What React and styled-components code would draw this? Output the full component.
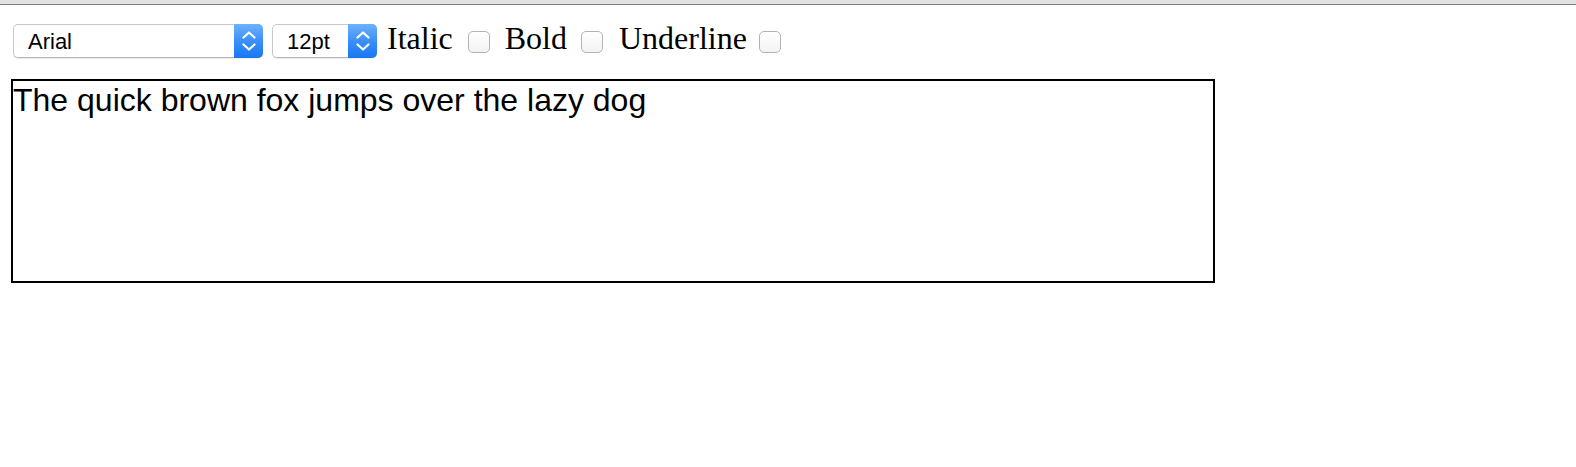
import React from 'react';
import styled, { createGlobalStyle } from 'styled-components';

const GlobalStyle = createGlobalStyle`
  html, body {
    margin: 0;
    padding: 0;
    background: #fff;
  }
  body {
    font-family: "Liberation Serif", "Times New Roman", serif;
    color: #000;
  }
`;

const TopBar = styled.div`
  height: 4px;
  background: #e2e2e2;
  border-bottom: 1px solid #7d7d7d;
`;

const Toolbar = styled.div`
  display: flex;
  align-items: flex-start;
  padding: 14px 0 0 13px;
  height: 46px;
`;

const SelectBox = styled.div`
  display: flex;
  align-items: stretch;
  box-sizing: border-box;
  width: ${p => p.width}px;
  height: 34px;
  margin: 5px ${p => p.gap}px 0 0;
  border: 1px solid #c9c9c9;
  border-bottom-color: #b4b4b4;
  border-radius: 5px;
  background: #fff;
  box-shadow: 0 1px 1px rgba(0, 0, 0, 0.08);
  font-family: "Liberation Sans", Arial, sans-serif;
  font-size: 22px;
  cursor: default;
`;

const SelectValue = styled.span`
  flex: 1;
  display: flex;
  align-items: center;
  padding-left: ${p => p.pad}px;
  padding-top: 1px;
`;

const Stepper = styled.span`
  width: 29px;
  margin: -1px -1px -1px 0;
  border-radius: 0 5px 5px 0;
  background: linear-gradient(to bottom, #6cb2fb 0%, #3b8ff8 50%, #1877f5 100%);
  display: flex;
  align-items: center;
  justify-content: center;
`;

const Label = styled.span`
  font-size: 32px;
  line-height: 36px;
  margin-top: 1px;
  white-space: nowrap;
`;

const Check = styled.input.attrs({ type: 'checkbox' })`
  appearance: none;
  -webkit-appearance: none;
  box-sizing: border-box;
  width: 22px;
  height: 22px;
  margin: 12px ${p => p.after}px 0 ${p => p.before}px;
  border: 1px solid #b3b3b3;
  border-radius: 5px;
  background: linear-gradient(to bottom, #ffffff, #f3f3f3);
  box-shadow: inset 0 1px 0 #fff;
`;

const Editor = styled.div`
  box-sizing: border-box;
  width: 1204px;
  height: 204px;
  margin: 14px 0 0 11px;
  padding-top: 1px;
  border: 2px solid #000;
  font-family: "Liberation Sans", Arial, sans-serif;
  font-size: 32px;
  line-height: normal;
`;

const Chevrons = () => (
  <svg width="14" height="20" viewBox="0 0 14 20" fill="none">
    <path d="M1.5 6.5 L7 1.5 L12.5 6.5" stroke="#fff" strokeWidth="2.2" strokeLinecap="round" strokeLinejoin="round" />
    <path d="M1.5 13.5 L7 18.5 L12.5 13.5" stroke="#fff" strokeWidth="2.2" strokeLinecap="round" strokeLinejoin="round" />
  </svg>
);

const Select = ({ value, width, pad, gap }) => (
  <SelectBox width={width} gap={gap}>
    <SelectValue pad={pad}>{value}</SelectValue>
    <Stepper>
      <Chevrons />
    </Stepper>
  </SelectBox>
);

export default function App() {
  return (
    <>
      <GlobalStyle />
      <TopBar />
      <Toolbar>
        <Select value="Arial" width={250} pad={14} gap={9} />
        <Select value="12pt" width={105} pad={14} gap={10} />
        <Label>Italic</Label>
        <Check before={15} after={15} />
        <Label>Bold</Label>
        <Check before={14} after={16} />
        <Label>Underline</Label>
        <Check before={12} after={0} />
      </Toolbar>
      <Editor contentEditable suppressContentEditableWarning>
        The quick brown fox jumps over the lazy dog
      </Editor>
    </>
  );
}
